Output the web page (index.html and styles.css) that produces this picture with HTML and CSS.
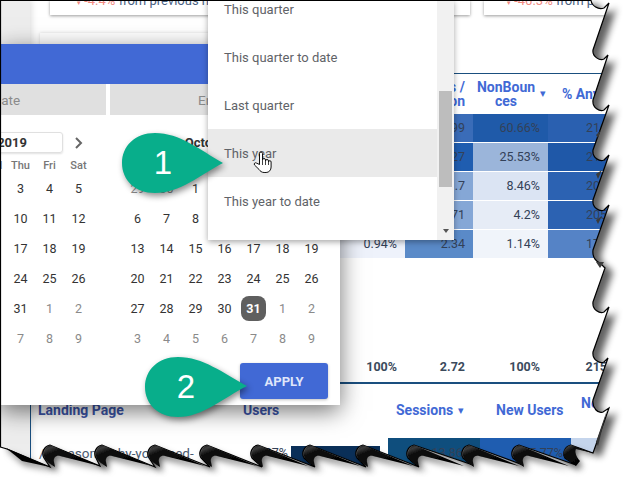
FILE: index.html
```html
<!DOCTYPE html>
<html lang="en">
<head>
<meta charset="utf-8">
<title>Date range</title>
<link rel="stylesheet" href="styles.css">
</head>
<body>
<div class="page">
  <div class="dash">
    <aside class="sidebar"></aside>
    <main class="main">
      <div class="cards">
        <div class="card card-a"><span class="delta"><span class="dot">&#9662;</span> -4.4%</span> <span class="note">from previous month</span></div>
        <div class="card card-b"><span class="delta"><span class="dot">&#9662;</span> -46.3%</span> <span class="note">from previous month</span></div>
      </div>
      <div class="strip"></div>
      <section class="metrics">
        <div class="th"></div>
        <div class="th th-end">Pages /<br>Session</div>
        <div class="th th-mid">NonBoun<br>ces <span class="sort">&#9662;</span></div>
        <div class="th th-any">% Anyone</div>

        <div class="td"></div><div class="td b1">2.99</div><div class="td c1">60.66%</div><div class="td d1">216</div>
        <div class="td"></div><div class="td b2">3.27</div><div class="td c2">25.53%</div><div class="td d2">214</div>
        <div class="td"></div><div class="td b3">1.7</div><div class="td c3">8.46%</div><div class="td d3">208</div>
        <div class="td"></div><div class="td b3">1.71</div><div class="td c4">4.2%</div><div class="td d3">205</div>
        <div class="td a5">0.94%</div><div class="td b5">2.34</div><div class="td c5">1.14%</div><div class="td d5">172</div>
      </section>
      <div class="totals">
        <div>100%</div><div>2.72</div><div>100%</div><div class="total-last">215</div>
      </div>
      <section class="pages">
        <div class="ph ph-land">Landing Page</div>
        <div class="ph ph-users">Users</div>
        <div class="ph ph-sess">Sessions <span class="sort">&#9662;</span></div>
        <div class="ph ph-new">New Users</div>
        <div class="ph ph-up">New Sessions</div>
        <div class="pc pc-land">/7-reasons-why-you-need-</div>
        <div class="pc pc-users"><span class="pct">1.37%</span><span class="bar"></span></div>
        <div class="pc pc-sess">13.86%</div>
        <div class="pc pc-new">15.77%</div>
        <div class="pc pc-last"></div>
      </section>
    </main>
  </div>

  <div class="popover">
    <div class="pop-head"></div>
    <div class="tabs">
      <div class="tab tab-start">Start Date</div>
      <div class="tab tab-end">End Date</div>
    </div>
    <div class="months">
      <div class="month">
        <div class="month-head month-head-end">
          <div class="year-box">Sep 2019</div>
          <svg class="chev" width="10" height="14" viewBox="0 0 10 14"><path d="M2 2l5 5-5 5" fill="none" stroke="#666" stroke-width="2"/></svg>
        </div>
        <div class="grid">
          <span class="dn">Sun</span><span class="dn">Mon</span><span class="dn">Tue</span><span class="dn">Wed</span><span class="dn">Thu</span><span class="dn">Fri</span><span class="dn">Sat</span>
          <span>29</span><span>30</span><span>1</span><span>2</span><span>3</span><span>4</span><span>5</span>
          <span>6</span><span>7</span><span>8</span><span>9</span><span>10</span><span>11</span><span>12</span>
          <span>13</span><span>14</span><span>15</span><span>16</span><span>17</span><span>18</span><span>19</span>
          <span>20</span><span>21</span><span>22</span><span>23</span><span>24</span><span>25</span><span>26</span>
          <span>27</span><span>28</span><span>29</span><span>30</span><span>31</span><span class="off">1</span><span class="off">2</span>
          <span class="off">3</span><span class="off">4</span><span class="off">5</span><span class="off">6</span><span class="off">7</span><span class="off">8</span><span class="off">9</span>
        </div>
      </div>
      <div class="month">
        <div class="month-head"><strong>October 2019</strong></div>
        <div class="grid">
          <span class="dn">Sun</span><span class="dn">Mon</span><span class="dn">Tue</span><span class="dn">Wed</span><span class="dn">Thu</span><span class="dn">Fri</span><span class="dn">Sat</span>
          <span class="off">29</span><span class="off">30</span><span>1</span><span>2</span><span>3</span><span>4</span><span>5</span>
          <span>6</span><span>7</span><span>8</span><span>9</span><span>10</span><span>11</span><span>12</span>
          <span>13</span><span>14</span><span>15</span><span>16</span><span>17</span><span>18</span><span>19</span>
          <span>20</span><span>21</span><span>22</span><span>23</span><span>24</span><span>25</span><span>26</span>
          <span>27</span><span>28</span><span>29</span><span>30</span><span><b class="sel">31</b></span><span class="off">1</span><span class="off">2</span>
          <span class="off">3</span><span class="off">4</span><span class="off">5</span><span class="off">6</span><span class="off">7</span><span class="off">8</span><span class="off">9</span>
        </div>
      </div>
    </div>
    <div class="pop-foot"><button class="apply" type="button">APPLY</button></div>
  </div>

  <div class="menu">
    <ul class="menu-list">
      <li>This quarter</li>
      <li>This quarter to date</li>
      <li>Last quarter</li>
      <li class="hover">This year</li>
      <li>This year to date</li>
    </ul>
    <div class="scroll"><div class="thumb"></div><div class="arrow"></div></div>
  </div>

  <svg class="hand" width="20" height="24" viewBox="0 0 20 24"><path d="M6.500 14.500V3.500a1.500 1.500 0 0 1 3 0V10a1.500 1.500 0 0 1 3 0v1a1.500 1.500 0 0 1 3 0v1a1.300 1.300 0 0 1 2.600 0v5c0 3-2 5.500-5 5.500h-2c-2.500 0-4-1.500-5-3L1.500 15c-1-1.500.8-3 2.200-1.800z" fill="#fff" stroke="#111" stroke-width="1"/><path d="M9.500 10v5M12.500 11v4M15.500 12v3" fill="none" stroke="#111" stroke-width=".8"/></svg>

  <div class="callout callout-one">
    <svg width="112" height="72" viewBox="0 0 112 72"><path class="drop" d="M103 31C80 43 60 61 35 61 15 61 2 48 2 31S15 1 35 1C60 1 80 18 103 31Z" fill="#08ae8b"/></svg>
    <span class="callout-num">1</span>
  </div>
  <div class="callout callout-two">
    <svg width="112" height="72" viewBox="0 0 112 72"><path class="drop" d="M104 30C80 42 60 61 35 61 15 61 2 48 2 31S15 1 35 1C60 1 80 17 104 30Z" fill="#08ae8b"/></svg>
    <span class="callout-num">2</span>
  </div>

  <svg class="torn" width="626" height="495" viewBox="0 0 626 495">
    <defs>
      <path id="paper" d="M.5.500H591C592 6 598 10 604 8L609 3 593 50C592 57 600 61 604 59L608 55 593 100C592 108 600 112 604 110L609 105 593 150C592 158 600 162 604 160L609 155 593 200C592 208 600 212 604 210L609 205 593 250C592 258 597 262 600 263L605 268 593 302C592 310 600 314 604 312L609 307 593 352C592 360 600 364 604 362L608 358 593 400C592 408 598 414 603 412L609 408 593 453 571 445C565 446 562 453 565 458L576 465 519 445C513 446 510 453 513 458L523 465 469 445C463 446 460 453 463 458L473 465 414 445C408 446 405 453 408 458L419 467 363 445C357 446 354 453 357 458L366 467 310 445C304 446 301 453 304 458L315 467 258 445C252 446 249 453 252 458L262 467 207 445C201 446 198 453 201 458L210 467 155 445C149 446 146 453 149 458L155 467 102 445C96 446 93 453 96 458L100 466 50 445C44 446 41 453 44 458L50 467 7 449 .5 447Z"/>
      <path id="outer" clip-rule="evenodd" d="M0 0H626V495H0ZM.5.500H591C592 6 598 10 604 8L609 3 593 50C592 57 600 61 604 59L608 55 593 100C592 108 600 112 604 110L609 105 593 150C592 158 600 162 604 160L609 155 593 200C592 208 600 212 604 210L609 205 593 250C592 258 597 262 600 263L605 268 593 302C592 310 600 314 604 312L609 307 593 352C592 360 600 364 604 362L608 358 593 400C592 408 598 414 603 412L609 408 593 453 571 445C565 446 562 453 565 458L576 465 519 445C513 446 510 453 513 458L523 465 469 445C463 446 460 453 463 458L473 465 414 445C408 446 405 453 408 458L419 467 363 445C357 446 354 453 357 458L366 467 310 445C304 446 301 453 304 458L315 467 258 445C252 446 249 453 252 458L262 467 207 445C201 446 198 453 201 458L210 467 155 445C149 446 146 453 149 458L155 467 102 445C96 446 93 453 96 458L100 466 50 445C44 446 41 453 44 458L50 467 7 449 .5 447Z"/>
      <clipPath id="outside"><use href="#outer" clip-rule="evenodd"/></clipPath>
      <filter id="blur" x="-5%" y="-5%" width="110%" height="110%"><feGaussianBlur stdDeviation="3.500"/></filter>
      <filter id="under" x="-20%" y="-50%" width="140%" height="220%"><feDropShadow dx="2" dy="4" stdDeviation="3" flood-color="#000" flood-opacity=".5"/></filter>
      <linearGradient id="curl" x1="0" y1="0" x2="1" y2="1"><stop offset="0" stop-color="#111"/><stop offset=".12" stop-color="#3c3c3c"/><stop offset=".26" stop-color="#0b0b0b"/><stop offset="1" stop-color="#000"/></linearGradient>
      <path id="tooth" d="M0 445L50 466 10 456C6 455 3 458 4 462L5 467-1 463C-8 458-8 449 0 445Z" fill="url(#curl)"/>
    </defs>
    <use href="#outer" fill="#fff" fill-rule="evenodd"/>
    <g clip-path="url(#outside)"><use href="#paper" x="8" y="4" fill="#000" opacity=".62" filter="url(#blur)"/></g>
    <use href="#paper" fill="none" stroke="#000" stroke-width="1.200"/>
    <g filter="url(#under)">
      <path d="M6 448L50 467 22 461Z" fill="#000"/>
      <use href="#tooth" x="50"/><use href="#tooth" x="102"/><use href="#tooth" x="155"/><use href="#tooth" x="207"/><use href="#tooth" x="258"/><use href="#tooth" x="310"/><use href="#tooth" x="363"/><use href="#tooth" x="414"/><use href="#tooth" x="469"/><use href="#tooth" x="519"/>
      <path d="M571 445L593 453 576 449 C574 452 577 458 580 461L576 466 566 459C561 455 564 447 571 445Z" fill="url(#curl)"/>
    </g>
    <path d="M607 410L596 442 598 446Z" fill="#333"/>
    <path d="M601 130L596 135 598 138Z M602 170L596 174 598 179Z M602 216L596 220 598 224Z M604 262L596 262 600 268Z" fill="#3a3a3a"/>
  </svg>
</div>
</body>
</html>
```

FILE: styles.css
```css
* { box-sizing: border-box; }
html, body { margin: 0; padding: 0; }
body { font-family: Roboto, "Liberation Sans", sans-serif; background: #fff; }

.page { position: relative; width: 626px; height: 495px; overflow: hidden; background: #fff; }

/* dashboard underneath */
.dash { display: flex; height: 495px; }
.sidebar { width: 30px; flex: none; background: #ededed; box-shadow: 2px 0 6px rgba(0,0,0,.12); }
.main { flex: 1; min-width: 0; display: flex; flex-direction: column; }

.cards { display: flex; height: 15px; padding-left: 20px; gap: 14px; }
.card { height: 15px; background: #fff; box-shadow: 0 1px 3px rgba(0,0,0,.4); font-size: 13px; line-height: 14px; white-space: nowrap; overflow: hidden; }
.card-a { width: 420px; padding-left: 27px; }
.card-b { width: 140px; padding-left: 23px; }
.card .delta, .card .note { position: relative; top: -6px; }
.delta { color: #f28b82; }
.dot { font-size: 7px; }
.note { color: #4a6183; }

.strip { height: 40px; margin: 18px 0 0 10px; width: 170px; background: #fff; box-shadow: 0 0 3px rgba(0,0,0,.15); }

.metrics { margin-left: 310px; width: 267px; border-top: 1px solid #1a4f7f; display: grid; grid-template-columns: 65px 68px 75px 59px; grid-auto-rows: 28px; grid-template-rows: 39px; row-gap: 1px; }
.th { color: #4169d5; font-size: 14px; font-weight: 700; line-height: 14px; display: flex; align-items: center; }
.th-end { justify-content: flex-end; text-align: right; padding-right: 8px; }
.th-mid { justify-content: center; text-align: center; padding-left: 2px; }
.th-any { padding-left: 14px; white-space: nowrap; }
.sort { font-size: 11px; font-weight: 400; margin-left: 5px; }
.td { font-size: 12.500px; line-height: 28px; color: #334158; text-align: right; padding-right: 8px; white-space: nowrap; }
.a5 { background: #eef2fb; }
.b1 { background: #3a6cb8; }
.b2 { background: #1f5db0; }
.b3 { background: #85a7d6; }
.b5 { background: #5a8ac8; }
.c1 { background: #1f5aa9; }
.c2 { background: #9bb5da; }
.c3 { background: #dbe4f3; }
.c4 { background: #e6ecf6; }
.c5 { background: #f0f4fa; }
.d1, .d2, .d3, .d5 { padding-right: 0; }
.d1 { background: #2a60b0; }
.d2 { background: #1f58a8; }
.d3 { background: #2c62b2; }
.d5 { background: #5583c6; }

.totals { margin: 101px 0 0 310px; width: 267px; height: 16px; display: grid; grid-template-columns: 65px 68px 75px 59px; font-size: 12.500px; font-weight: 700; line-height: 16px; color: #3b4a5c; text-align: right; }
.totals div { padding-right: 8px; }
.totals .total-last { padding-right: 0; }

.pages { margin: 7px 0 0; border-top: 2px solid #1a4f7f; border-left: 1px solid #1a4f7f; display: grid; grid-template-columns: 212px 137px 8px 92px 91px 80px; grid-template-rows: 54px 40px; font-size: 14px; }
.ph { color: #4169d5; font-weight: 700; display: flex; align-items: center; white-space: nowrap; padding-bottom: 2px; }
.ph-land { padding-left: 7px; color: #3c55a8; }
.ph-users { color: #3c55a8; }
.ph-sess { grid-column: 4; padding-left: 8px; }
.ph-new { padding-left: 16px; }
.ph-up { padding: 0 0 16px 10px; }
.pc { font-size: 12.500px; color: #334158; line-height: 30px; white-space: nowrap; }
.pc-land { padding-left: 8px; color: #4a5a70; font-size: 13.500px; }
.pc-users { display: flex; }
.pct { width: 48px; padding-right: 3px; text-align: right; }
.bar { width: 89px; height: 40px; margin-top: 8px; background: #0a2f58; }
.pc-sess { grid-column: 4; background: #0f4e7d; text-align: right; padding-right: 8px; }
.pc-new { background: #1f5db0; text-align: right; padding-right: 8px; }
.pc-last { background: #c5d5ec; }

/* date popover */
.popover { position: absolute; left: 0; top: 44px; width: 340px; height: 361px; background: #fff; box-shadow: 0 6px 22px rgba(0,0,0,.55); }
.pop-head { height: 40px; background: #4169d5; }
.tabs { display: flex; gap: 4px; height: 31px; margin-left: -132px; }
.tab { display: flex; align-items: center; justify-content: center; background: #e0e0e0; color: #8a8a8a; font-size: 13.500px; }
.tab-start { width: 238px; flex: none; padding-left: 6px; }
.tab-end { flex: 1; }
.months { display: flex; gap: 30px; margin: 17px 0 0 -110px; }
.month { width: 203px; flex: none; }
.month-head { height: 21px; margin-bottom: 1px; display: flex; align-items: center; justify-content: center; font-size: 13px; color: #333; }
.month-head-end { justify-content: flex-end; gap: 11px; padding-right: 9px; }
.year-box { width: 172px; height: 21px; line-height: 19px; border: 1px solid #e0e0e0; border-radius: 3px; box-shadow: 0 1px 2px rgba(0,0,0,.12); font-size: 13px; font-weight: 700; text-align: right; padding-right: 35px; }
.chev { flex: none; }
.grid { display: grid; grid-template-columns: repeat(7, 29px); grid-template-rows: 19px; grid-auto-rows: 30px; font-size: 12.500px; color: #333; }
.grid span { display: flex; align-items: center; justify-content: center; }
.grid .dn { font-size: 11px; font-weight: 500; color: #777; padding-top: 3px; }
.grid .off { color: #8a8a8a; }
.sel { width: 25px; height: 25px; border-radius: 8px; background: #5f5f5f; color: #fff; font-weight: 700; display: flex; align-items: center; justify-content: center; }
.pop-foot { display: flex; justify-content: flex-end; padding-right: 12px; margin-top: 10px; }
.apply { width: 88px; height: 36px; border: 0; border-radius: 3px; background: #4169d5; color: #dfe5fa; font: 700 13px Roboto, sans-serif; box-shadow: 0 1px 3px rgba(0,0,0,.25); }

/* preset menu */
.menu { position: absolute; left: 208px; top: 0; width: 246px; height: 240px; background: #fff; display: flex; overflow: hidden; box-shadow: 0 2px 6px rgba(0,0,0,.35); }
.menu-list { list-style: none; margin: -15px 0 0; padding: 0; flex: 1; }
.menu-list li { height: 48px; line-height: 50px; padding-left: 16px; font-size: 13px; color: #5f6368; }
.menu-list .hover { background: #eaeaea; }
.scroll { width: 17px; flex: none; background: #f1f1f1; padding: 91px 2px 0; display: flex; flex-direction: column; align-items: center; }
.thumb { width: 13px; height: 96px; background: #bdbdbd; }
.arrow { margin-top: 42px; width: 0; height: 0; border: 3px solid transparent; border-top: 4px solid #555; border-bottom: 0; }

.hand { position: absolute; left: 253px; top: 150px; }

/* numbered callouts */
.callout { position: absolute; width: 112px; height: 72px; }
.callout-one { left: 120px; top: 132px; }
.callout-two { left: 143px; top: 356px; }
.callout svg { display: block; overflow: visible; }
.drop { filter: drop-shadow(2px 3px 3px rgba(0,0,0,.45)); }
.callout-num { position: absolute; top: 13px; left: 0; width: 86px; text-align: center; color: #fff; font: 33px/36px "Liberation Sans", sans-serif; }

.torn { position: absolute; left: 0; top: 0; pointer-events: none; }
```
